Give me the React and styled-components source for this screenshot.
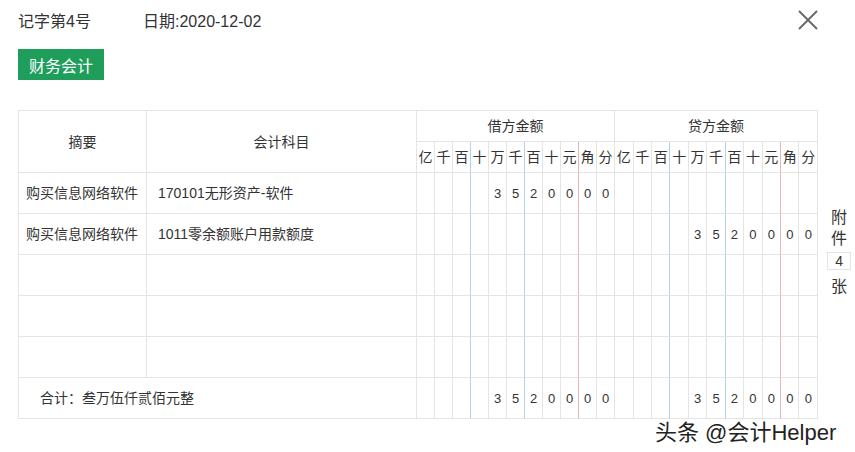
import React from "react";
import styled, { createGlobalStyle } from "styled-components";

const UNITS = ["亿", "千", "百", "十", "万", "千", "百", "十", "元", "角", "分"];
const AMOUNT = ["", "", "", "", "3", "5", "2", "0", "0", "0", "0"];
const EMPTY = Array(11).fill("");

const rows = [
  { summary: "购买信息网络软件", subject: "170101无形资产-软件", debit: AMOUNT, credit: EMPTY },
  { summary: "购买信息网络软件", subject: "1011零余额账户用款额度", debit: EMPTY, credit: AMOUNT },
  { summary: "", subject: "", debit: EMPTY, credit: EMPTY },
  { summary: "", subject: "", debit: EMPTY, credit: EMPTY },
  { summary: "", subject: "", debit: EMPTY, credit: EMPTY },
];

// separator colour on the right side of each digit column
const lineColor = (i) => {
  if (i === 2 || i === 5) return "#b3d2e8";
  if (i === 8) return "#e8b5b9";
  return "#e4e4e4";
};

const GlobalStyle = createGlobalStyle`
  body {
    margin: 0;
    background: #fff;
    font-family: "Liberation Sans", "Noto Sans CJK SC", sans-serif;
    color: #333;
  }
`;

const Page = styled.div`
  position: relative;
  width: 855px;
  height: 452px;
  padding: 0 0 0 18px;
  box-sizing: border-box;
  overflow: hidden;
`;

const TopBar = styled.div`
  display: flex;
  align-items: center;
  height: 40px;
  font-size: 16px;
  color: #333;
`;

const VoucherNo = styled.span`
  width: 125px;
`;

const Close = styled.button`
  margin-left: auto;
  margin-right: 36px;
  width: 22px;
  height: 22px;
  padding: 0;
  border: none;
  background: none;
  display: flex;
  align-items: center;
  justify-content: center;
`;

const Tag = styled.div`
  display: inline-flex;
  align-items: center;
  height: 31px;
  padding: 0 11px;
  margin-top: 9px;
  background: #1f9e5b;
  color: #fff;
  font-size: 16px;
`;

const Body = styled.div`
  display: flex;
  align-items: flex-start;
  margin-top: 30px;
`;

const Table = styled.table`
  table-layout: fixed;
  width: 799px;
  border-collapse: separate;
  border-spacing: 0;
  border-top: 1px solid #e4e4e4;
  border-left: 1px solid #e4e4e4;
  font-size: 14px;
  color: #333;
`;

const Cell = styled.td`
  border-right: 1px solid ${(p) => p.$line || "#e4e4e4"};
  border-bottom: 1px solid #e4e4e4;
  height: ${(p) => p.$h || 40}px;
  padding: 0;
  text-align: ${(p) => p.$align || "center"};
  padding-left: ${(p) => p.$pl || 0}px;
  white-space: nowrap;
  overflow: hidden;
  line-height: 1;
`;

const Digit = styled(Cell)`
  font-size: 13px;
`;

const Side = styled.div`
  display: flex;
  flex-direction: column;
  align-items: center;
  margin-left: 9px;
  margin-top: 97px;
  font-size: 16px;
  color: #333;
  line-height: 21px;
`;

const Count = styled.div`
  width: 22px;
  height: 16px;
  border: 1px solid #e4e4e4;
  font-size: 14px;
  line-height: 16px;
  text-align: center;
  margin: 3px 0 6px;
`;

const Watermark = styled.div`
  position: absolute;
  left: 655px;
  top: 414px;
  font-size: 22px;
  color: #222;
  text-shadow: 0 0 2px #fff, 0 0 2px #fff;
`;

const DigitCells = ({ values, h }) =>
  values.map((v, i) => (
    <Digit key={i} $line={lineColor(i)} $h={h}>
      {v}
    </Digit>
  ));

const App = () => {
  return (
    <Page>
      <GlobalStyle />
      <TopBar>
        <VoucherNo>记字第4号</VoucherNo>
        <span>日期:2020-12-02</span>
        <Close aria-label="close">
          <svg width="20" height="20" viewBox="0 0 20 20">
            <path d="M1 1L19 19M19 1L1 19" stroke="#666" strokeWidth="1.8" />
          </svg>
        </Close>
      </TopBar>
      <Tag>财务会计</Tag>
      <Body>
        <Table>
          <colgroup>
            <col style={{ width: 128 }} />
            <col style={{ width: 270 }} />
            {UNITS.map((_, i) => (
              <col key={"d" + i} style={{ width: 18 }} />
            ))}
            {UNITS.map((_, i) => (
              <col key={"c" + i} style={{ width: 18.45 }} />
            ))}
          </colgroup>
          <thead>
            <tr>
              <Cell rowSpan={2} $h={61}>摘要</Cell>
              <Cell rowSpan={2} $h={61}>会计科目</Cell>
              <Cell colSpan={11} $h={30}>借方金额</Cell>
              <Cell colSpan={11} $h={30}>贷方金额</Cell>
            </tr>
            <tr>
              {UNITS.map((u, i) => (
                <Cell key={"hd" + i} $line={lineColor(i)} $h={30}>{u}</Cell>
              ))}
              {UNITS.map((u, i) => (
                <Cell key={"hc" + i} $line={lineColor(i)} $h={30}>{u}</Cell>
              ))}
            </tr>
          </thead>
          <tbody>
            {rows.map((r, idx) => (
              <tr key={idx}>
                <Cell $align="left" $pl={7}>{r.summary}</Cell>
                <Cell $align="left" $pl={11}>{r.subject}</Cell>
                <DigitCells values={r.debit} />
                <DigitCells values={r.credit} />
              </tr>
            ))}
            <tr>
              <Cell colSpan={2} $align="left" $pl={21}>合计：叁万伍仟贰佰元整</Cell>
              <DigitCells values={AMOUNT} />
              <DigitCells values={AMOUNT} />
            </tr>
          </tbody>
        </Table>
        <Side>
          <span>附</span>
          <span>件</span>
          <Count>4</Count>
          <span>张</span>
        </Side>
      </Body>
      <Watermark>头条 @会计Helper</Watermark>
    </Page>
  );
};

export default App;
